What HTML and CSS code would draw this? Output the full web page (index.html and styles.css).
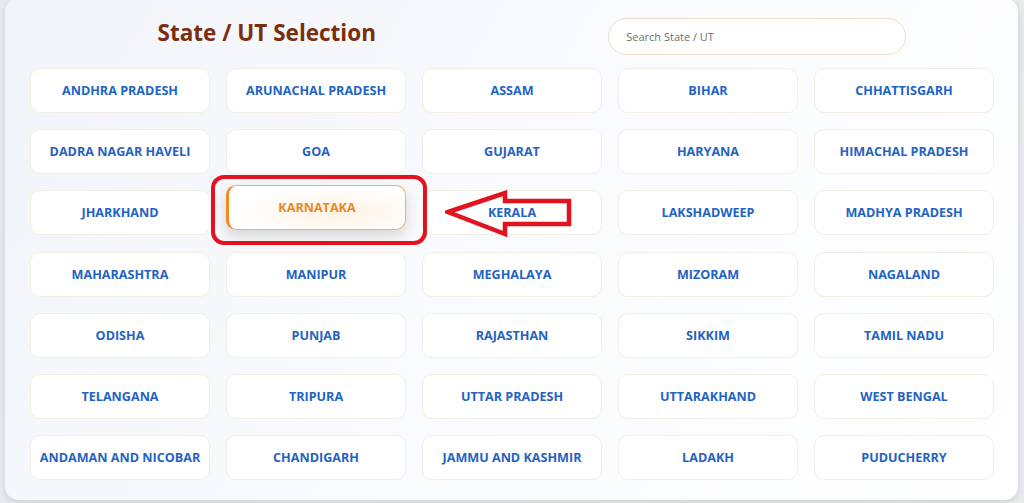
FILE: index.html
```html
<!DOCTYPE html>
<html lang="en">
<head>
<meta charset="utf-8">
<title>State / UT Selection</title>
<link rel="stylesheet" href="styles.css">
</head>
<body>
<div class="card">
  <div class="header">
    <h1 class="title">State / UT Selection</h1>
    <div class="search-wrap"><input class="search" type="text" placeholder="Search State / UT"></div>
  </div>
  <div class="grid">
    <button class="state">ANDHRA PRADESH</button>
    <button class="state">ARUNACHAL PRADESH</button>
    <button class="state">ASSAM</button>
    <button class="state">BIHAR</button>
    <button class="state">CHHATTISGARH</button>
    <button class="state">DADRA NAGAR HAVELI</button>
    <button class="state">GOA</button>
    <button class="state">GUJARAT</button>
    <button class="state">HARYANA</button>
    <button class="state">HIMACHAL PRADESH</button>
    <button class="state">JHARKHAND</button>
    <button class="state selected">KARNATAKA</button>
    <button class="state">KERALA</button>
    <button class="state">LAKSHADWEEP</button>
    <button class="state">MADHYA PRADESH</button>
    <button class="state">MAHARASHTRA</button>
    <button class="state">MANIPUR</button>
    <button class="state">MEGHALAYA</button>
    <button class="state">MIZORAM</button>
    <button class="state">NAGALAND</button>
    <button class="state">ODISHA</button>
    <button class="state">PUNJAB</button>
    <button class="state">RAJASTHAN</button>
    <button class="state">SIKKIM</button>
    <button class="state">TAMIL NADU</button>
    <button class="state">TELANGANA</button>
    <button class="state">TRIPURA</button>
    <button class="state">UTTAR PRADESH</button>
    <button class="state">UTTARAKHAND</button>
    <button class="state">WEST BENGAL</button>
    <button class="state">ANDAMAN AND NICOBAR</button>
    <button class="state">CHANDIGARH</button>
    <button class="state">JAMMU AND KASHMIR</button>
    <button class="state">LADAKH</button>
    <button class="state">PUDUCHERRY</button>
  </div>
  <div class="mark-box"></div>
  <svg class="mark-arrow" width="130" height="50" viewBox="0 0 130 50">
    <polygon points="3,22 60,3 60,11 124,11 124,34 60,34 60,44" fill="none" stroke="#e2131f" stroke-width="4.5" stroke-linejoin="miter"/>
  </svg>
</div>
</body>
</html>
```
FILE: styles.css
```css
* { box-sizing: border-box; }
html, body { margin: 0; padding: 0; }
body {
  background: #e8eaed;
  font-family: "Open Sans", "Noto Sans", sans-serif;
  width: 1024px;
  height: 503px;
  overflow: hidden;
}
.card {
  position: relative;
  margin: -2px 0 0 5px;
  width: 1013px;
  height: 502px;
  border-radius: 14px;
  background: linear-gradient(120deg, #f1f4f9 0%, #f8fafd 45%, #ffffff 100%);
  box-shadow: 0 2px 6px rgba(0,0,0,0.12);
  padding: 19px 25px 0 25px;
}
.header {
  display: grid;
  grid-template-columns: 1fr 1fr;
  align-items: center;
  height: 37px;
  margin-bottom: 14px;
}
.title {
  margin: 0;
  text-align: center;
  font-size: 22.5px;
  font-weight: 700;
  color: #7a2e0e;
  padding-right: 8px;
  padding-bottom: 8px;
  letter-spacing: 0;
}
.search-wrap {
  display: flex;
  justify-content: center;
  padding-left: 10px;
}
.search {
  width: 298px;
  height: 37px;
  border: 1px solid #ecdfc6;
  border-radius: 19px;
  background: #ffffff;
  padding: 0 17px;
  font-family: inherit;
  font-size: 11px;
  color: #333;
  outline: none;
}
.search::placeholder { color: #6f6f6f; }
.grid {
  display: grid;
  grid-template-columns: repeat(5, 180px);
  column-gap: 16px;
  row-gap: 16.2px;
}
.state {
  height: 45px;
  background: #ffffff;
  border: 1px solid #f4efe4;
  border-radius: 10px;
  font-family: inherit;
  font-size: 12.6px;
  font-weight: 700;
  color: #1f63c4;
  padding: 0;
  cursor: pointer;
}
.state.selected {
  transform: translateY(-5px);
  border: 1px solid #e2b774;
  border-left: 3px solid #f08a1c;
  color: #e8891f;
  background: radial-gradient(ellipse at 60% 60%, #fff2e4 0%, #ffffff 70%);
  box-shadow: 0 6px 14px rgba(60, 40, 20, 0.16);
}
.mark-box {
  position: absolute;
  left: 206px;
  top: 177px;
  width: 216px;
  height: 70px;
  border: 4px solid #e2131f;
  border-radius: 13px;
}
.mark-arrow {
  position: absolute;
  left: 440px;
  top: 192px;
}
```
